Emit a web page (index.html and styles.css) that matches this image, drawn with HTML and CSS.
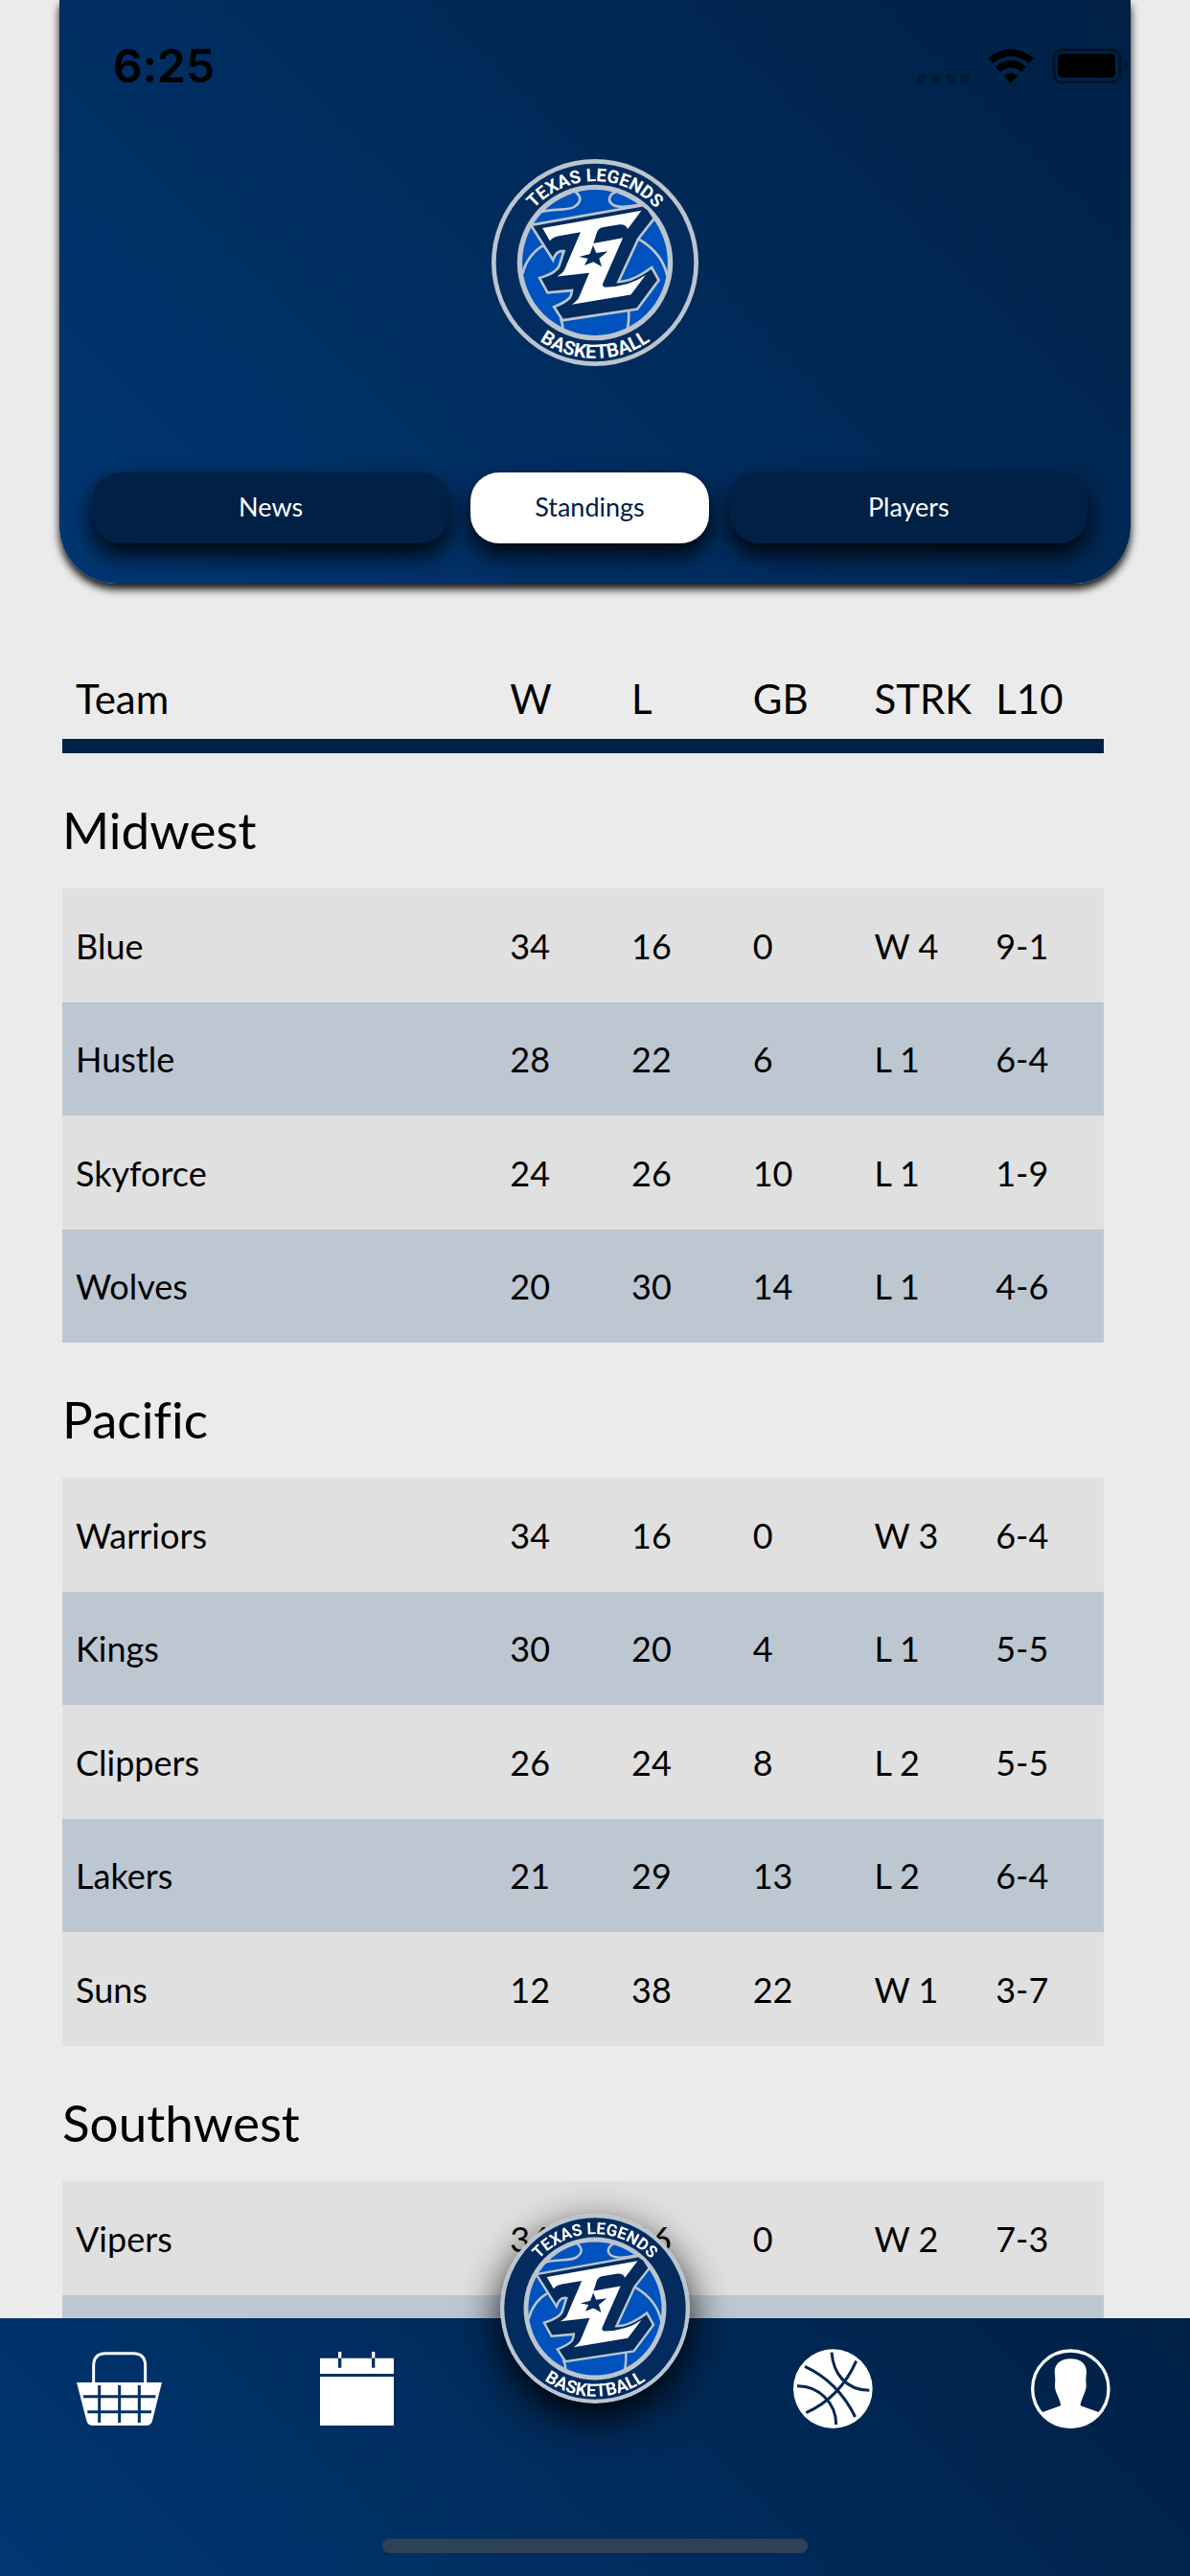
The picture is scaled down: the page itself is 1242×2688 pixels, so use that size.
FILE: index.html
```html
<!DOCTYPE html>
<html lang="en">
<head>
  <meta charset="UTF-8">
  <meta name="viewport" content="width=device-width, initial-scale=1.0">
  <title>Texas Legends - Standings</title>
  <link rel="stylesheet" href="styles.css">
</head>
<body>
  <header class="header">
    <div class="status">
      <span class="time">6:25</span>
      <div class="status-icons">
        <svg width="55" height="10" viewBox="0 0 55 10" fill="#001b38">
          <rect width="10" height="10" rx="3"/>
          <rect x="15" width="10" height="10" rx="3"/>
          <rect x="30" width="10" height="10" rx="3"/>
          <rect x="45" width="10" height="10" rx="3"/>
        </svg>
        <svg width="48" height="36" viewBox="0 0 48 36">
          <path d="M0 10 Q24 -10 48 10 L43 15 Q24 0 5 15 Z"/>
          <path d="M8 19 Q24 5 40 19 L35 24 Q24 15 13 24 Z"/>
          <path d="M17 28 Q24 22 31 28 L24 36 Z"/>
        </svg>
        <svg width="79" height="37" viewBox="0 0 79 37">
          <rect x="2" y="2" width="69" height="34" rx="9" fill="none" stroke="#00142b" stroke-width="3"/>
          <rect x="6" y="6" width="60" height="25" rx="5"/>
          <path d="M75 12 Q79 14 79 18 Q79 23 75 25 Z" fill="#00142b"/>
        </svg>
      </div>
    </div>

    <!-- Team logo, reused by the tab bar -->
    <svg class="logo" viewBox="40 47 646 646" role="img" aria-label="Texas Legends Basketball">
      <defs>
        <path id="arc-top" d="M109 370 A254 254 0 0 1 617 370"/>
        <path id="arc-bottom" d="M64 370 A299 299 0 0 0 662 370"/>
      </defs>
      <g id="legends">
        <circle cx="363" cy="370" r="323" fill="#bac5ce"/>
        <circle cx="363" cy="370" r="309" fill="#032b5e"/>
        <circle cx="363" cy="370" r="243" fill="#bac5ce"/>
        <circle cx="363" cy="370" r="227" fill="#0052bf"/>
        <g fill="none" stroke="#bac5ce" stroke-width="8">
          <path d="M180 216 C235 196 275 212 300 195 C325 178 318 160 298 146"/>
          <path d="M430 148 C406 158 400 178 420 190 C435 200 470 196 510 188"/>
          <path d="M137 405 Q152 345 203 316"/>
          <path d="M498 296 Q575 340 589 415"/>
          <path d="M255 545 Q264 562 262 585"/>
          <path d="M468 515 Q470 560 462 588"/>
        </g>
        <path d="M163 253 L512 191 L530 204 L548 232 L498 296 L436 430 Q480 430 540 385 L562 425 L495 515 L262 550 L235 508 Q270 495 284 480 Q290 472 291 457 L215 464 L190 418 Q245 402 252 378 L266 334 Q242 330 232 362 Z" fill="#032b5e" stroke="#bac5ce" stroke-width="8"/>
        <path d="M199 262 L508 208 L465 265 Q460 250 440 251 L386 260 Q370 264 366 285 L358 310 L450 293 L388 434 Q384 446 395 447 Q470 445 521 409 L475 470 L290 501 Q310 490 316 472 L345 402 L245 413 Q262 405 268 392 L318 275 L250 287 Q232 290 222 302 Z" fill="#fff"/>
        <path d="M357 316 L367 340 L403 335 L376 357 L384 383 L358 368 L330 379 L341 357 L313 352 L347 343 Z" fill="#032b5e"/>
        <g class="logo-text">
          <text class="logo-top"><textPath href="#arc-top" startOffset="50%">TEXAS LEGENDS</textPath></text>
          <text class="logo-bottom"><textPath href="#arc-bottom" startOffset="50%">BASKETBALL</textPath></text>
        </g>
      </g>
    </svg>

    <div class="switch">
      <button type="button">News</button>
      <button type="button" class="active">Standings</button>
      <button type="button">Players</button>
    </div>
  </header>

  <main>
    <table class="standings">
      <colgroup>
        <col class="col-team">
        <col span="5">
      </colgroup>
      <thead>
        <tr><th>Team</th><th>W</th><th>L</th><th>GB</th><th>STRK</th><th>L10</th></tr>
      </thead>
      <tbody class="division">
        <tr><th colspan="6">Midwest</th></tr>
      </tbody>
      <tbody class="teams">
        <tr><td>Blue</td><td>34</td><td>16</td><td>0</td><td>W 4</td><td>9-1</td></tr>
        <tr><td>Hustle</td><td>28</td><td>22</td><td>6</td><td>L 1</td><td>6-4</td></tr>
        <tr><td>Skyforce</td><td>24</td><td>26</td><td>10</td><td>L 1</td><td>1-9</td></tr>
        <tr><td>Wolves</td><td>20</td><td>30</td><td>14</td><td>L 1</td><td>4-6</td></tr>
      </tbody>
      <tbody class="division">
        <tr><th colspan="6">Pacific</th></tr>
      </tbody>
      <tbody class="teams">
        <tr><td>Warriors</td><td>34</td><td>16</td><td>0</td><td>W 3</td><td>6-4</td></tr>
        <tr><td>Kings</td><td>30</td><td>20</td><td>4</td><td>L 1</td><td>5-5</td></tr>
        <tr><td>Clippers</td><td>26</td><td>24</td><td>8</td><td>L 2</td><td>5-5</td></tr>
        <tr><td>Lakers</td><td>21</td><td>29</td><td>13</td><td>L 2</td><td>6-4</td></tr>
        <tr><td>Suns</td><td>12</td><td>38</td><td>22</td><td>W 1</td><td>3-7</td></tr>
      </tbody>
      <tbody class="division">
        <tr><th colspan="6">Southwest</th></tr>
      </tbody>
      <tbody class="teams">
        <tr><td>Vipers</td><td>34</td><td>16</td><td>0</td><td>W 2</td><td>7-3</td></tr>
        <tr><td></td><td></td><td></td><td></td><td></td><td></td></tr>
      </tbody>
    </table>
  </main>

  <nav class="tabs">
    <div class="tab-row">
      <a href="#" aria-label="Shop">
        <svg width="89" height="77" viewBox="57 102 267 231">
          <path d="M110 200 V146 Q110 107 148 107 H234 Q272 107 272 146 V200" fill="none" stroke="#fff" stroke-width="9"/>
          <path d="M57 198 H324 L294 318 Q290 333 275 333 H107 Q92 333 88 318 Z" fill="#fff"/>
          <path d="M78 242 H304 M91 290 H291 M128 207 V324 M191 207 V324 M253 207 V324" stroke="#003165" stroke-width="9"/>
        </svg>
      </a>
      <a href="#" aria-label="Schedule">
        <svg width="77" height="77" viewBox="822 102 231 231">
          <path d="M822 122 H1053 V171 H822 Z M822 180 H1053 V333 H822 Z" fill="#fff"/>
          <path d="M884 102 V122 M989 102 V122" stroke="#fff" stroke-width="10"/>
          <path d="M884 122 V152 M989 122 V152" stroke="#002f62" stroke-width="10"/>
        </svg>
      </a>
      <a href="#" class="home" aria-label="Home">
        <svg viewBox="40 47 646 646"><use href="#legends"/></svg>
      </a>
      <a href="#" aria-label="Games">
        <svg width="83" height="83" viewBox="81 93 249 249">
          <circle cx="205" cy="218" r="124" fill="#fff"/>
          <path d="M201 104 C206 170 245 222 319 223 M278 131 Q228 245 121 293 M117 148 Q220 195 275 306 M93 209 C160 208 215 262 215 330" fill="none" stroke="#002853" stroke-width="9"/>
        </svg>
      </a>
      <a href="#" aria-label="Profile">
        <svg width="83" height="83" viewBox="828 93 249 249">
          <circle cx="952" cy="218" r="119" fill="none" stroke="#fff" stroke-width="10"/>
          <path d="M952 124 C985 124 1002 142 1002 165 L1000 188 L1001 208 C1001 222 995 232 990 245 C986 256 983 262 983 271 L1042 292 Q1008 341 952 341 Q896 341 863 292 L921 271 C921 262 918 256 914 245 C907 230 903 222 903 208 L904 188 L902 165 C903 140 920 124 952 124 Z" fill="#fff"/>
        </svg>
      </a>
    </div>
    <div class="indicator"></div>
  </nav>
</body>
</html>
```

FILE: styles.css
```css
* {
  box-sizing: border-box;
}

body {
  margin: 0;
  min-height: 100vh;
  overflow: hidden;
  font-family: "Trebuchet MS", Lato, "Open Sans", sans-serif;
  font-variant-ligatures: none;
  background-color: #ebebeb;
  color: #000;
}

.logo-text {
  font-family: Roboto, sans-serif;
  font-weight: bold;
  fill: #fff;
  text-anchor: middle;
}

.logo-top {
  font-size: 56px;
}

.logo-bottom {
  font-size: 60px;
}

/* Header card */
.header {
  display: flex;
  flex-direction: column;
  align-items: center;
  margin: 0 5%;
  background: linear-gradient(45deg, #003672, #002045);
  border-radius: 0 0 60px 60px;
  box-shadow: 0 6px 9px rgba(0, 0, 0, 0.9);
}

.status {
  display: flex;
  justify-content: space-between;
  align-items: center;
  width: 100%;
  height: 136px;
  padding: 0 3px 0 56px;
}

.time {
  font-family: Inter, sans-serif;
  font-size: 48px;
  font-weight: 600;
}

.status-icons {
  display: flex;
  align-items: flex-end;
  gap: 19px;
}

.logo {
  width: 216px;
  height: 216px;
  margin-top: 30px;
}

.switch {
  display: grid;
  grid-template-columns: 3fr 2fr 3fr;
  gap: 22px;
  width: 100%;
  margin-top: 111px;
  padding: 0 45px 42px 34px;
}

.switch button {
  height: 74px;
  padding: 0 0 4px;
  border: 0;
  border-radius: 30px;
  background-color: #002045;
  box-shadow: 0 12px 24px rgba(0, 0, 0, 0.9);
  color: #fff;
  font: inherit;
  font-size: 27px;
}

.switch .active {
  background-color: #fff;
  color: #002045;
}

/* Standings */
main {
  padding: 72px 90px 0 65px;
}

.standings {
  width: 100%;
  table-layout: fixed;
  border-collapse: separate;
  border-spacing: 0;
  text-align: left;
}

.col-team {
  width: 41.7%;
}

.standings th {
  font-weight: normal;
}

.standings td,
.standings thead th {
  padding: 0 0 0 14px;
}

.standings thead th {
  height: 105px;
  padding-top: 6px;
  border-bottom: 15px solid #002045;
  font-size: 42px;
}

.division th {
  height: 141px;
  padding: 18px 0 0;
  font-size: 53px;
}

.teams tr {
  height: 119px;
  background-color: #e0e0e0;
  font-size: 36px;
}

.teams tr:nth-child(even) {
  height: 118px;
  background-color: #bdc7d2;
}

/* Bottom tab bar */
.tabs {
  position: fixed;
  left: 0;
  right: 0;
  bottom: 0;
  display: flex;
  flex-direction: column;
  align-items: center;
  padding: 32px 0 24px;
  background: linear-gradient(45deg, #003672, #002045);
}

.tab-row {
  display: grid;
  grid-template-columns: repeat(5, 1fr);
  width: 100%;
}

.tab-row a {
  display: flex;
  justify-content: center;
  align-items: center;
  position: relative;
  height: 83px;
}

.home svg {
  position: absolute;
  bottom: 26px;
  width: 198px;
  height: 198px;
  border-radius: 50%;
  box-shadow: 0 16px 44px rgba(0, 0, 0, 0.95);
}

.indicator {
  width: 444px;
  height: 15px;
  margin-top: 115px;
  border-radius: 8px;
  background-color: #2f4155;
}
```
